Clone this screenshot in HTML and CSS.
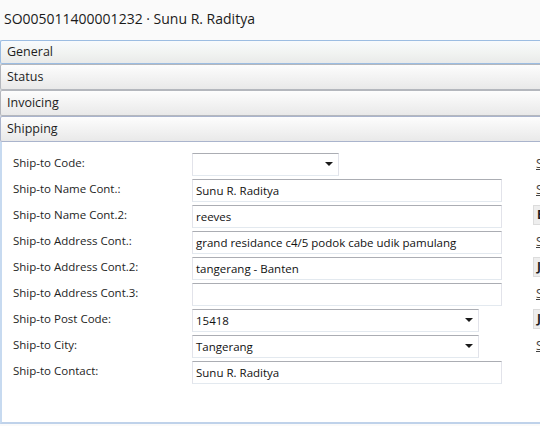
FILE: index.html
```html
<!DOCTYPE html>
<html>
<head>
<meta charset="utf-8">
<link rel="stylesheet" href="styles.css">
</head>
<body>
<div class="title">SO005011400001232 · Sunu R. Raditya</div>
<div class="fasttab fasttab-active">General</div>
<div class="fasttab">Status</div>
<div class="fasttab">Invoicing</div>
<div class="fasttab fasttab-open">Shipping</div>
<div class="panel">
  <div class="form">
    <div class="label">Ship-to Code:</div>
    <div class="field"><div class="input select w-code"><span></span><i class="arrow"></i></div></div>
    <div class="right"><span class="rlink">S</span></div>

    <div class="label">Ship-to Name Cont.:</div>
    <div class="field"><div class="input w-full">Sunu R. Raditya</div></div>
    <div class="right"><span class="rlink">S</span></div>

    <div class="label">Ship-to Name Cont.2:</div>
    <div class="field"><div class="input w-full">reeves</div></div>
    <div class="right"><span class="rbox">B</span></div>

    <div class="label">Ship-to Address Cont.:</div>
    <div class="field"><div class="input w-full">grand residance c4/5 podok cabe udik pamulang</div></div>
    <div class="right"><span class="rlink">S</span></div>

    <div class="label">Ship-to Address Cont.2:</div>
    <div class="field"><div class="input w-full">tangerang - Banten</div></div>
    <div class="right"><span class="rbox">J</span></div>

    <div class="label">Ship-to Address Cont.3:</div>
    <div class="field"><div class="input w-full"></div></div>
    <div class="right"><span class="rlink">S</span></div>

    <div class="label">Ship-to Post Code:</div>
    <div class="field"><div class="input select w-mid"><span>15418</span><i class="arrow"></i></div></div>
    <div class="right"><span class="rbox">J</span></div>

    <div class="label">Ship-to City:</div>
    <div class="field"><div class="input select w-mid"><span>Tangerang</span><i class="arrow"></i></div></div>
    <div class="right"><span class="rlink">S</span></div>

    <div class="label">Ship-to Contact:</div>
    <div class="field"><div class="input w-full">Sunu R. Raditya</div></div>
    <div class="right"></div>
  </div>
</div>
</body>
</html>
```
FILE: styles.css
```css
html, body {
  margin: 0;
  padding: 0;
}
body {
  width: 540px;
  height: 426px;
  overflow: hidden;
  background: #fafafa;
  font-family: "Open Sans", "Noto Sans", sans-serif;
  color: #1e1e1e;
}
.title {
  height: 40px;
  line-height: 38px;
  padding-left: 4px;
  font-size: 14px;
  color: #1a1a1a;
  white-space: nowrap;
}
.fasttab {
  box-sizing: border-box;
  height: 26px;
  line-height: 24px;
  padding-left: 6px;
  margin-right: -4px;
  font-size: 12.5px;
  color: #1e1e1e;
  border: 1px solid #b4b7bd;
  border-right: none;
  border-radius: 2px 0 0 2px;
  background: linear-gradient(#fdfdfd, #f3f3f3 50%, #e9e9e9);
}
.fasttab-active {
  height: 24px;
  line-height: 22px;
  border-color: #9cbde2;
  background: linear-gradient(#f7fafd, #f2f4f2 50%, #e9eae9);
}
.fasttab-open {
  border-color: #aab4cc;
}
.panel {
  box-sizing: border-box;
  height: 282px;
  background: #ffffff;
  border-left: 2px solid #c7daf0;
  border-bottom: 2px solid #bfd2ea;
  padding: 9px 0 0 11px;
}
.form {
  display: grid;
  grid-template-columns: 179px 341px auto;
  grid-auto-rows: 26px;
  align-items: center;
}
.label {
  font-size: 11.5px;
  color: #1e1e1e;
  white-space: nowrap;
  padding-bottom: 3px;
}
.input {
  box-sizing: border-box;
  height: 23px;
  line-height: 21px;
  padding-left: 3px;
  font-size: 11.5px;
  color: #111;
  background: #fff;
  border: 1px solid #e2e3ea;
  border-top-color: #abadb3;
  border-bottom-color: #e3e9ef;
  white-space: nowrap;
  overflow: hidden;
}
.w-full { width: 310px; }
.w-mid { width: 287px; }
.w-code { width: 147px; }
.select {
  display: flex;
  justify-content: space-between;
  align-items: center;
  padding-right: 5px;
}
.arrow {
  display: block;
  width: 0;
  height: 0;
  border-left: 4px solid transparent;
  border-right: 4px solid transparent;
  border-top: 4px solid #1a1a1a;
}
.right {
  font-size: 12px;
  white-space: nowrap;
  padding-bottom: 2px;
}
.rlink {
  color: #444;
  text-decoration: underline;
  padding-left: 3px;
}
.rbox {
  display: inline-block;
  height: 18px;
  line-height: 18px;
  padding: 0 4px 0 3px;
  font-weight: bold;
  background: #eeeeee;
  border: 1px solid #dcdcdc;
}
```
